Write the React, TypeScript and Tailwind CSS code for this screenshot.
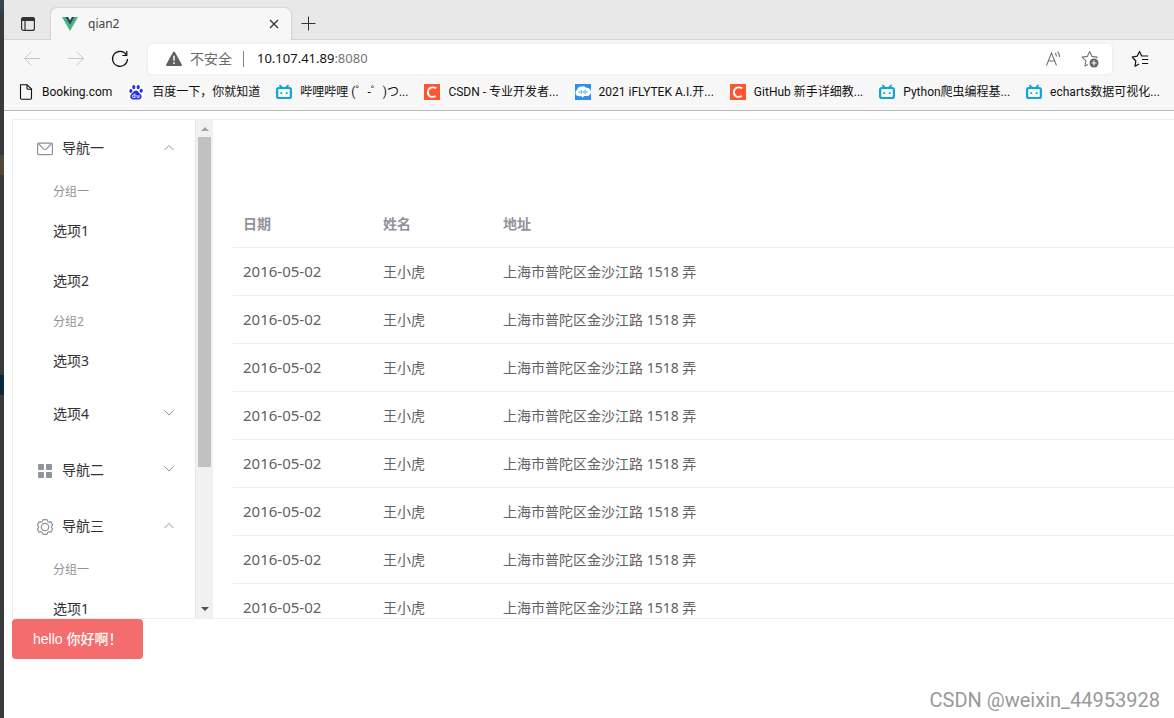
import React from "react";

type IconKind = "page" | "baidu" | "bili" | "csdn" | "ifly";

const bookmarks: { icon: IconKind; label: string }[] = [
  { icon: "page", label: "Booking.com" },
  { icon: "baidu", label: "百度一下，你就知道" },
  { icon: "bili", label: "哔哩哔哩 (゜-゜)つ..." },
  { icon: "csdn", label: "CSDN - 专业开发者..." },
  { icon: "ifly", label: "2021 iFLYTEK A.I.开..." },
  { icon: "csdn", label: "GitHub 新手详细教..." },
  { icon: "bili", label: "Python爬虫编程基..." },
  { icon: "bili", label: "echarts数据可视化..." },
];

const rows = Array.from({ length: 8 }, () => ({
  date: "2016-05-02",
  name: "王小虎",
  address: "上海市普陀区金沙江路 1518 弄",
}));

function BookmarkIcon({ kind }: { kind: IconKind }) {
  if (kind === "page")
    return (
      <svg className="size-4 shrink-0" viewBox="0 0 16 16" fill="none" stroke="#111" strokeWidth="1.1">
        <path d="M2.500 .7h6.600L13.500 5.100v9a1.100 1.100 0 0 1-1.100 1.100H3.600a1.100 1.100 0 0 1-1.100-1.100z" />
        <path d="M9 .8v3.400a1 1 0 0 0 1 1h3.500" />
      </svg>
    );
  if (kind === "baidu")
    return (
      <svg className="size-4 shrink-0 bg-white" viewBox="0 0 16 16" fill="#2932e1">
        <ellipse cx="2.900" cy="7" rx="1.600" ry="2.100" />
        <ellipse cx="5.800" cy="3.100" rx="1.600" ry="2.200" />
        <ellipse cx="10.200" cy="3.100" rx="1.600" ry="2.200" />
        <ellipse cx="13.200" cy="6.700" rx="1.600" ry="2" />
        <path d="M8 6.500c1.400 0 2 .9 2.800 1.900.9 1.100 2.800 2.100 2.800 4.100s-1.300 2.900-2.900 2.900H5c-1.600 0-2.800-1.100-2.800-2.900 0-2 1.800-3 2.800-4.100.8-1 1.600-1.900 3-1.900z" />
        <path d="M7 9.600v3.900H5.600a1.100 1.100 0 0 1 0-2.500H7M8.900 11v1.600c0 .7.300.9.900.9h1.300V11" fill="none" stroke="#fff" strokeWidth=".9" />
      </svg>
    );
  if (kind === "bili")
    return (
      <svg className="size-4 shrink-0" viewBox="0 0 16 16" fill="none" stroke="#0ca5dc" strokeWidth="2.200" strokeLinecap="round">
        <rect x="1.100" y="4" width="13.800" height="10" rx="1.800" />
        <path d="M4 1.600 6 3.600M12 1.600l-2 2" strokeWidth="1.900" />
        <path d="M5.300 8.200v1.800M10.700 8.200v1.800" strokeWidth="1.800" strokeLinecap="butt" />
      </svg>
    );
  if (kind === "csdn")
    return (
      <svg className="size-4 shrink-0" viewBox="0 0 16 16">
        <path d="M0 0h16v16H0z" fill="#fc5531" />
        <path d="M12.200 4.400C9.200 2.600 4.100 3 3.900 8.300c-.1 4.700 4.300 5.300 7.900 3.800" fill="none" stroke="#fff" strokeWidth="1.900" />
      </svg>
    );
  return (
    <svg className="size-4 shrink-0" viewBox="0 0 16 16">
      <path d="M0 0h16v16H0z" fill="#2f8ff0" />
      <path d="M4 12.200A3.500 3.500 0 0 1 2.200 5.700 4.200 4.200 0 0 1 6.500 2.600a4.400 4.400 0 0 1 4.600 1.200A4 4 0 0 1 12.500 12H9.200l-1.900 1.900-.3-1.700z" fill="#fff" />
      <path d="M4.300 7.200v1.600M6.200 6v4M8.100 7v2M10 5.800v4.200M11.900 7.200v1.600" stroke="#2f8ff0" strokeWidth=".9" />
    </svg>
  );
}

function Chevron({ up = false }: { up?: boolean }) {
  return (
    <svg className="h-3 w-3 shrink-0" viewBox="0 0 12 12" fill="none" stroke="#909399" strokeWidth="1">
      {up ? <path d="M1.500 8 6 3.500 10.500 8" /> : <path d="M1.500 2.500 6 7l4.500-4.500" />}
    </svg>
  );
}

function MailIcon() {
  return (
    <svg className="size-[18px] shrink-0" viewBox="0 0 18 18" fill="none" stroke="#909399" strokeWidth="1.200">
      <rect x="1.600" y="4.100" width="14.800" height="11.500" rx="1" />
      <path d="M2.500 4.500l4.700 5.200a2.400 2.400 0 0 0 3.600 0l4.700-5.200" />
    </svg>
  );
}

function GridIcon() {
  return (
    <svg className="size-[18px] shrink-0" viewBox="0 0 18 18" fill="#909399">
      <rect x="2" y="3" width="6" height="6" rx=".8" />
      <rect x="10" y="3" width="6" height="6" rx=".8" />
      <rect x="2" y="11" width="6" height="6" rx=".8" />
      <rect x="10" y="11" width="6" height="6" rx=".8" />
    </svg>
  );
}

function GearIcon() {
  return (
    <svg className="size-[18px] shrink-0" viewBox="0 0 18 18" fill="none" stroke="#909399" strokeWidth="1.200" strokeLinejoin="round">
      <g transform="translate(0 1)">
        <path d="M7 1.600h4l.7 1.800 1.300.8 2-.3 1.600 2.900-1.100 1.500v1.400l1.100 1.500-1.600 2.900-2-.3-1.300.8-.7 1.800H7l-.7-1.800-1.300-.8-2 .3-1.600-2.900 1.100-1.500V8.300L1.400 6.800 3 3.900l2 .3 1.300-.8z" />
        <circle cx="9" cy="9" r="3.700" />
      </g>
    </svg>
  );
}

function NavHeader({ icon, label, up }: { icon: React.ReactNode; label: string; up?: boolean }) {
  return (
    <button type="button" aria-expanded={!!up} className="flex h-14 w-full items-center gap-2 pr-5 pl-[23px] text-sm text-[#303133]">
      {icon}
      <span className="flex-1 text-left">{label}</span>
      <Chevron up={up} />
    </button>
  );
}

function GroupTitle({ children }: { children: React.ReactNode }) {
  return <div className="flex h-[30px] items-center pt-[2px] pl-10 text-xs text-[#909399]">{children}</div>;
}

function NavItem({ children }: { children: React.ReactNode }) {
  return (
    <a href="#" className="flex h-[50px] items-center pl-10 text-sm text-[#303133]">
      {children}
    </a>
  );
}

function DesktopEdge() {
  return (
    <div className="flex w-1 shrink-0 flex-col bg-[#3a3a3c]">
      <div className="h-3 bg-[#36444f]" />
      <div className="h-[143px]" />
      <div className="h-5 bg-[#50493a]" />
      <div className="h-[200px]" />
      <div className="h-5 bg-[#0d293e]" />
    </div>
  );
}

function BrowserChrome() {
  return (
    <header className="border-b border-[#b8b8b8] bg-[#f7f7f7]">
      <div className="flex h-10 bg-[#e8e8e8]">
        <div className="flex w-[47px] items-center justify-center border-b border-[#d3d3d3] pt-2">
          <button type="button" aria-label="标签页操作">
            <svg className="size-4" viewBox="0 0 16 16" fill="none" stroke="#333" strokeWidth="1.200">
              <rect x="1.600" y="1.600" width="12.800" height="12.800" rx="2" />
              <path d="M1.600 3.600a2 2 0 0 1 2-2h8.800a2 2 0 0 1 2 2v.9H1.600z" fill="#333" />
              <path d="M5 5v9" />
            </svg>
          </button>
        </div>
        <div className="flex w-60 items-end pt-2">
          <div className="flex h-8 w-full items-center rounded-t-md bg-[#f7f7f7] pr-2 pl-[11px] shadow-[0_0_2px_#aaa] [clip-path:inset(-3px_-3px_0_-3px)]">
            <svg className="size-4" viewBox="0 0 16 16">
              <path d="M0 1h3.200L8 9.300 12.800 1H16L8 15z" fill="#41b883" />
              <path d="M3.200 1h3L8 4.200 9.800 1h3L8 9.300z" fill="#35495e" />
            </svg>
            <span className="ml-[10px] flex-1 text-xs text-[#444]">qian2</span>
            <button type="button" aria-label="关闭标签页" className="p-1">
              <svg className="size-[10px]" viewBox="0 0 10 10" stroke="#333" strokeWidth="1.300">
                <path d="M1 1l8 8M9 1 1 9" />
              </svg>
            </button>
          </div>
        </div>
        <div className="flex flex-1 items-center border-b border-[#d3d3d3] pt-2 pl-[10px]">
          <button type="button" aria-label="新建标签页">
            <svg className="size-4" viewBox="0 0 16 16" stroke="#333" strokeWidth="1">
              <path d="M7.500 .5v14M.5 7.500h14" />
            </svg>
          </button>
        </div>
      </div>

      <div className="flex h-[38px] items-center pl-[19px]">
        <button type="button" aria-label="后退">
          <svg className="size-[18px]" viewBox="0 0 18 18" fill="none" stroke="#c8c8c8" strokeWidth="1">
            <path d="M17 8.500H1.500M8.500 1.500l-7 7 7 7" />
          </svg>
        </button>
        <button type="button" aria-label="前进" className="ml-[26px]">
          <svg className="size-[18px]" viewBox="0 0 18 18" fill="none" stroke="#c8c8c8" strokeWidth="1">
            <path d="M1 8.500h15.500M9.500 1.500l7 7-7 7" />
          </svg>
        </button>
        <button type="button" aria-label="刷新" className="ml-[26px]">
          <svg className="size-[18px]" viewBox="0 0 18 18" fill="none" stroke="#111" strokeWidth="1.200">
            <path d="M15.300 4.800A7.500 7.500 0 1 0 16.500 9" />
            <path d="M15.800 1v4.500h-4.500" />
          </svg>
        </button>
        <div className="ml-[19px] flex h-[30px] min-w-0 flex-1 items-center rounded bg-white pr-[13px] pl-[18px] shadow-[0_0_3px_#e2e2e2]">
          <svg className="size-4 shrink-0" viewBox="0 0 16 16">
            <path d="M7.100 1.100a1 1 0 0 1 1.800 0l6.900 12.500a1 1 0 0 1-.9 1.400H1.100a1 1 0 0 1-.9-1.400z" fill="#606060" />
            <path d="M8 4.800v5M8 11.300v1.700" stroke="#fff" strokeWidth="1.500" />
          </svg>
          <span className="ml-2 shrink-0 text-sm text-[#6b6b6b]">不安全</span>
          <span className="mx-[11px] h-4 w-px shrink-0 bg-[#888]" />
          <a href="#" className="flex-1 pl-[2px] text-[13px] text-[#111]">
            10.107.41.89<span className="text-[#757575]">:8080</span>
          </a>
          <button type="button" aria-label="大声朗读">
            <svg className="size-[18px]" viewBox="0 0 18 18" fill="none" stroke="#757575" strokeWidth="1.100">
              <path d="M1.500 15.500 6.500 3l5 12.500M3.200 11h6.600" />
              <path d="M10 3.200q1.500 1.200 1.500 3.300M12.300 1.600q2.500 2 2.200 5.400" />
            </svg>
          </button>
          <button type="button" aria-label="添加到收藏夹" className="ml-[18px]">
            <svg className="size-[18px]" viewBox="0 0 18 18" fill="none" stroke="#757575" strokeWidth="1.100" strokeLinejoin="round">
              <path d="M7 14.400 4 16l.9-5.200-3.800-3.700 5.200-.7L8.700 1.500l2.300 4.900 5.200.7-1 1" />
              <circle cx="13" cy="13" r="4.500" fill="#666" stroke="none" />
              <path d="M13 10.500v5M10.500 13h5" stroke="#fff" />
            </svg>
          </button>
        </div>
        <button type="button" aria-label="收藏夹" className="mr-[25px] ml-[19px]">
          <svg className="size-[18px]" viewBox="0 0 18 18" fill="none" stroke="#111" strokeWidth="1.200" strokeLinejoin="round">
            <path d="M8 14 4 16.300 4.800 11 1.200 7l5-.8L8.500 1.500l2.200 4.500h6.500" />
            <path d="M11 9.500h6.200M11 13.500h6.200" />
          </svg>
        </button>
      </div>

      <nav className="flex h-8 items-center gap-4 overflow-hidden pb-1 pl-[14px] font-[Roboto,'Noto_Sans_CJK_SC',sans-serif]">
        {bookmarks.map((b) => (
          <a key={b.label} href="#" className="flex shrink-0 items-center gap-2 text-xs whitespace-nowrap text-[#111]">
            <BookmarkIcon kind={b.icon} />
            {b.label}
          </a>
        ))}
      </nav>
    </header>
  );
}

function Sidebar() {
  return (
    <aside className="flex w-[200px] shrink-0 overflow-hidden">
      <nav className="min-w-0 flex-1 border-r border-[#e6e6e6]">
        <NavHeader icon={<MailIcon />} label="导航一" up />
        <GroupTitle>分组一</GroupTitle>
        <NavItem>选项1</NavItem>
        <NavItem>选项2</NavItem>
        <GroupTitle>分组2</GroupTitle>
        <NavItem>选项3</NavItem>
        <button type="button" aria-expanded={false} className="flex h-14 w-full items-center justify-between pr-5 pl-10 text-sm text-[#303133]">
          选项4
          <Chevron />
        </button>
        <NavHeader icon={<GridIcon />} label="导航二" />
        <NavHeader icon={<GearIcon />} label="导航三" up />
        <GroupTitle>分组一</GroupTitle>
        <NavItem>选项1</NavItem>
      </nav>
      <div className="flex w-[17px] flex-col items-center bg-[#f1f1f1]">
        <svg className="h-[17px] w-[17px] shrink-0" viewBox="0 0 17 17">
          <path d="M5 11h8L9 7z" fill="#a3a3a3" />
        </svg>
        <div className="h-[330px] w-[13px] bg-[#c1c1c1]" />
        <div className="flex-1" />
        <svg className="h-[17px] w-[17px] shrink-0" viewBox="0 0 17 17">
          <path d="M5 6h8l-4 4z" fill="#505050" />
        </svg>
      </div>
    </aside>
  );
}

function PeopleTable() {
  return (
    <table className="w-full table-fixed border-separate border-spacing-0 text-left text-sm text-[#606266]">
      <colgroup>
        <col className="w-[140px]" />
        <col className="w-[120px]" />
        <col />
      </colgroup>
      <thead className="text-[#909399]">
        <tr className="h-12">
          <th className="border-b border-[#ebeef5] px-[10px] font-bold">日期</th>
          <th className="border-b border-[#ebeef5] px-[10px] font-bold">姓名</th>
          <th className="border-b border-[#ebeef5] px-[10px] font-bold">地址</th>
        </tr>
      </thead>
      <tbody>
        {rows.map((r, i) => (
          <tr key={i} className="h-12">
            <td className="border-b border-[#ebeef5] px-[10px] text-[15px]">{r.date}</td>
            <td className="border-b border-[#ebeef5] px-[10px]">{r.name}</td>
            <td className="border-b border-[#ebeef5] px-[10px]">{r.address}</td>
          </tr>
        ))}
      </tbody>
    </table>
  );
}

export default function App() {
  return (
    <div className="relative flex min-h-screen overflow-hidden bg-white font-['Noto_Sans','Noto_Sans_CJK_SC',sans-serif]">
      <DesktopEdge />
      <div className="flex min-w-0 flex-1 flex-col">
        <BrowserChrome />
        <div className="pt-2 pl-2">
          <section className="flex h-[500px] border border-r-0 border-[#eee]">
            <Sidebar />
            <main className="min-w-0 flex-1 overflow-hidden pt-20 pl-5">
              <PeopleTable />
            </main>
          </section>
          <button
            type="button"
            className="flex h-10 items-center rounded bg-[#f56c6c] px-[21px] font-['Liberation_Sans','Noto_Sans_CJK_SC',sans-serif] text-sm font-medium text-white"
          >
            hello 你好啊！
          </button>
        </div>
      </div>
      <div className="absolute right-[14px] bottom-1 font-[Roboto,sans-serif] text-xl text-[#999]">
        CSDN @weixin_44953928
      </div>
    </div>
  );
}
